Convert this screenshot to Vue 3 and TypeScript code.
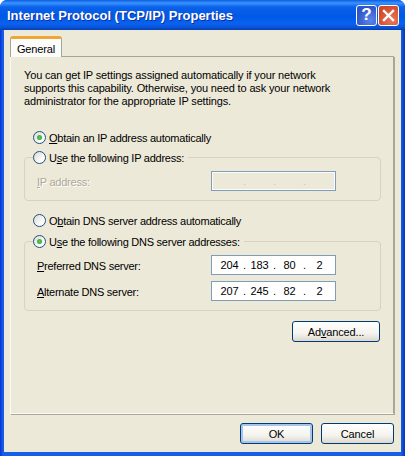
<script setup lang="ts">
interface DnsField {
  key: string;
  rest: string;
  octets: string[];
}

const dnsFields: DnsField[] = [
  { key: 'P', rest: 'referred DNS server:', octets: ['204', '183', '80', '2'] },
  { key: 'A', rest: 'lternate DNS server:', octets: ['207', '245', '82', '2'] },
];
</script>

<template>
  <div class="window">
    <header class="titlebar">
      <span class="title">Internet Protocol (TCP/IP) Properties</span>
      <div class="caption-buttons">
        <button class="caption help">?</button>
        <button class="caption close">
          <svg width="13" height="13" viewBox="0 0 13 13">
            <path d="M2 2 L11 11 M11 2 L2 11" stroke="#fff" stroke-width="2.4" stroke-linecap="square" fill="none" />
          </svg>
        </button>
      </div>
    </header>

    <div class="client">
      <div class="tabs">
        <div class="tab">General</div>
      </div>

      <section class="panel">
        <p class="intro">
          You can get IP settings assigned automatically if your network<br />
          supports this capability. Otherwise, you need to ask your network<br />
          administrator for the appropriate IP settings.
        </p>

        <label class="radio-row first">
          <span class="radio checked"></span>
          <span><u>O</u>btain an IP address automatically</span>
        </label>

        <fieldset class="group ip-group">
          <legend class="radio-row">
            <span class="radio"></span>
            <span>U<u>s</u>e the following IP address:</span>
          </legend>
          <div class="field disabled">
            <span class="field-label"><u>I</u>P address:</span>
            <div class="ip-box">
              <span></span><i>.</i><span></span><i>.</i><span></span><i>.</i><span></span>
            </div>
          </div>
        </fieldset>

        <label class="radio-row dns-auto">
          <span class="radio"></span>
          <span>O<u>b</u>tain DNS server address automatically</span>
        </label>

        <fieldset class="group dns-group">
          <legend class="radio-row">
            <span class="radio checked"></span>
            <span>U<u>s</u>e the following DNS server addresses:</span>
          </legend>
          <div v-for="f in dnsFields" :key="f.key" class="field">
            <span class="field-label"><u>{{ f.key }}</u>{{ f.rest }}</span>
            <div class="ip-box">
              <template v-for="(o, i) in f.octets" :key="i">
                <i v-if="i > 0">.</i>
                <span>{{ o }}</span>
              </template>
            </div>
          </div>
        </fieldset>

        <div class="advanced-row">
          <button class="xp-btn advanced">Ad<u>v</u>anced...</button>
        </div>
      </section>

      <footer class="footer">
        <button class="xp-btn default">OK</button>
        <button class="xp-btn">Cancel</button>
      </footer>
    </div>
  </div>
</template>

<style>
html,
body {
  margin: 0;
  background: #fff;
  overflow: hidden;
}
</style>

<style scoped>
.window {
  box-sizing: border-box;
  width: 405px;
  height: 456px;
  display: flex;
  flex-direction: column;
  padding: 0 4px 4px 4px;
  background: linear-gradient(90deg, #0831d9 0, #1660e8 3px, #1660e8 401px, #0831b8 405px);
  border-radius: 7px 7px 0 0;
  font-family: 'Liberation Sans', Arial, sans-serif;
  font-size: 11px;
  letter-spacing: -0.15px;
  color: #000;
}

.titlebar {
  height: 30px;
  margin: 0 -4px;
  padding: 0 6px 0 7px;
  display: flex;
  align-items: center;
  justify-content: space-between;
  border-radius: 7px 7px 0 0;
  background: linear-gradient(180deg, #0a5ce0 0, #3a93ff 3px, #0a62ea 7px, #0058e6 16px, #0a62f0 24px, #0a4fd0 28px, #003dae 30px);
}

.title {
  color: #fff;
  font-weight: 700;
  font-size: 13px;
  letter-spacing: 0;
  text-shadow: 1px 1px 0 #0f2f9a;
  white-space: nowrap;
}

.caption-buttons {
  display: flex;
  gap: 1px;
}

.caption {
  box-sizing: border-box;
  width: 21px;
  height: 21px;
  padding: 0;
  display: flex;
  align-items: center;
  justify-content: center;
  border: 1px solid #fff;
  border-radius: 3px;
  color: #fff;
  font-family: 'Liberation Sans', Arial, sans-serif;
  font-size: 17px;
  font-weight: 700;
}

.help {
  background: radial-gradient(circle at 70% 75%, #5a86ea, #2f55c8 70%);
}

.close {
  background: radial-gradient(circle at 70% 75%, #e8785a, #d2492a 75%);
}

.client {
  flex: 1;
  min-height: 0;
  display: flex;
  flex-direction: column;
  padding: 6px 7px 0 6px;
  background: #ece9d8;
}

.tabs {
  display: flex;
  height: 20px;
  position: relative;
  z-index: 1;
}

.tab {
  box-sizing: border-box;
  width: 52px;
  height: 21px;
  display: flex;
  align-items: center;
  justify-content: center;
  padding-top: 2px;
  background: #fcfcfb;
  border: 1px solid #a5a59a;
  border-top: 3px solid #f0a637;
  border-bottom: 0;
  border-radius: 3px 3px 0 0;
}

.panel {
  box-sizing: border-box;
  height: 358px;
  padding: 12px 12px 0 13px;
  background: #ece9d8;
  border: 1px solid #a5a59a;
  border-left-color: #fbfaf5;
  border-bottom-color: #fbfaf5;
  box-shadow: 1px 1px 0 #a9a89c;
}

.intro {
  margin: 0;
  line-height: 13px;
  white-space: nowrap;
}

.radio-row {
  display: flex;
  align-items: center;
  gap: 3px;
  height: 17px;
  letter-spacing: -0.25px;
}

.radio-row.first {
  margin: 21px 0 3px 9px;
}

.dns-auto {
  margin: 11px 0 4px 9px;
}

.radio {
  position: relative;
  box-sizing: border-box;
  width: 13px;
  height: 13px;
  border: 1px solid #1c5180;
  border-radius: 50%;
  background: linear-gradient(135deg, #dcd9ce, #fff 75%);
}

.radio.checked::after {
  content: '';
  position: absolute;
  top: 3px;
  left: 3px;
  width: 5px;
  height: 5px;
  border-radius: 50%;
  background: radial-gradient(circle, #58c958, #2f9e32);
}

.group {
  min-width: 0;
  margin: 0;
  border: 1px solid #d6d3c2;
  border-radius: 4px;
}

.group legend {
  margin-left: -4px;
  padding: 0 4px 0 0;
  box-sizing: border-box;
}

.ip-group {
  padding: 5px 44px 9px 12px;
}

.dns-group {
  padding: 5px 44px 9px 12px;
}

.field {
  display: flex;
  align-items: center;
  height: 20px;
}

.field + .field {
  margin-top: 6px;
}

.field-label {
  width: 174px;
  flex: none;
  padding-top: 2px;
  letter-spacing: -0.25px;
}

.ip-box {
  box-sizing: border-box;
  width: 125px;
  height: 20px;
  padding: 0 0 0 7px;
  display: flex;
  align-items: center;
  gap: 3px;
  background: #fff;
  border: 1px solid #7f9db9;
}

.ip-box span {
  width: 21px;
  text-align: center;
}

.ip-box i {
  width: 3px;
  font-style: normal;
  text-align: center;
}

.disabled .field-label {
  color: #aca899;
  text-shadow: 1px 1px 0 #fff;
}

.disabled .ip-box {
  background: #ece9d8;
  box-shadow: inset 1px 1px 0 #fbfcfd, inset -1px -1px 0 #fbfcfd;
  color: #c9c6b5;
}

.advanced-row {
  display: flex;
  justify-content: flex-end;
  margin-top: 10px;
  padding-right: 1px;
}

.xp-btn {
  box-sizing: border-box;
  height: 21px;
  width: 73px;
  padding: 0;
  border: 1px solid #003c74;
  border-radius: 3px;
  background: linear-gradient(180deg, #fff 0, #f4f3ee 60%, #dcd8ce 100%);
  font-family: 'Liberation Sans', Arial, sans-serif;
  font-size: 11px;
  letter-spacing: -0.15px;
  color: #000;
}

.xp-btn.advanced {
  width: 88px;
}

.xp-btn.default {
  box-shadow: inset 0 0 0 2px #a6c4ee;
}

.footer {
  display: flex;
  justify-content: flex-end;
  gap: 8px;
  margin-top: 9px;
  padding-right: 0;
}
</style>
